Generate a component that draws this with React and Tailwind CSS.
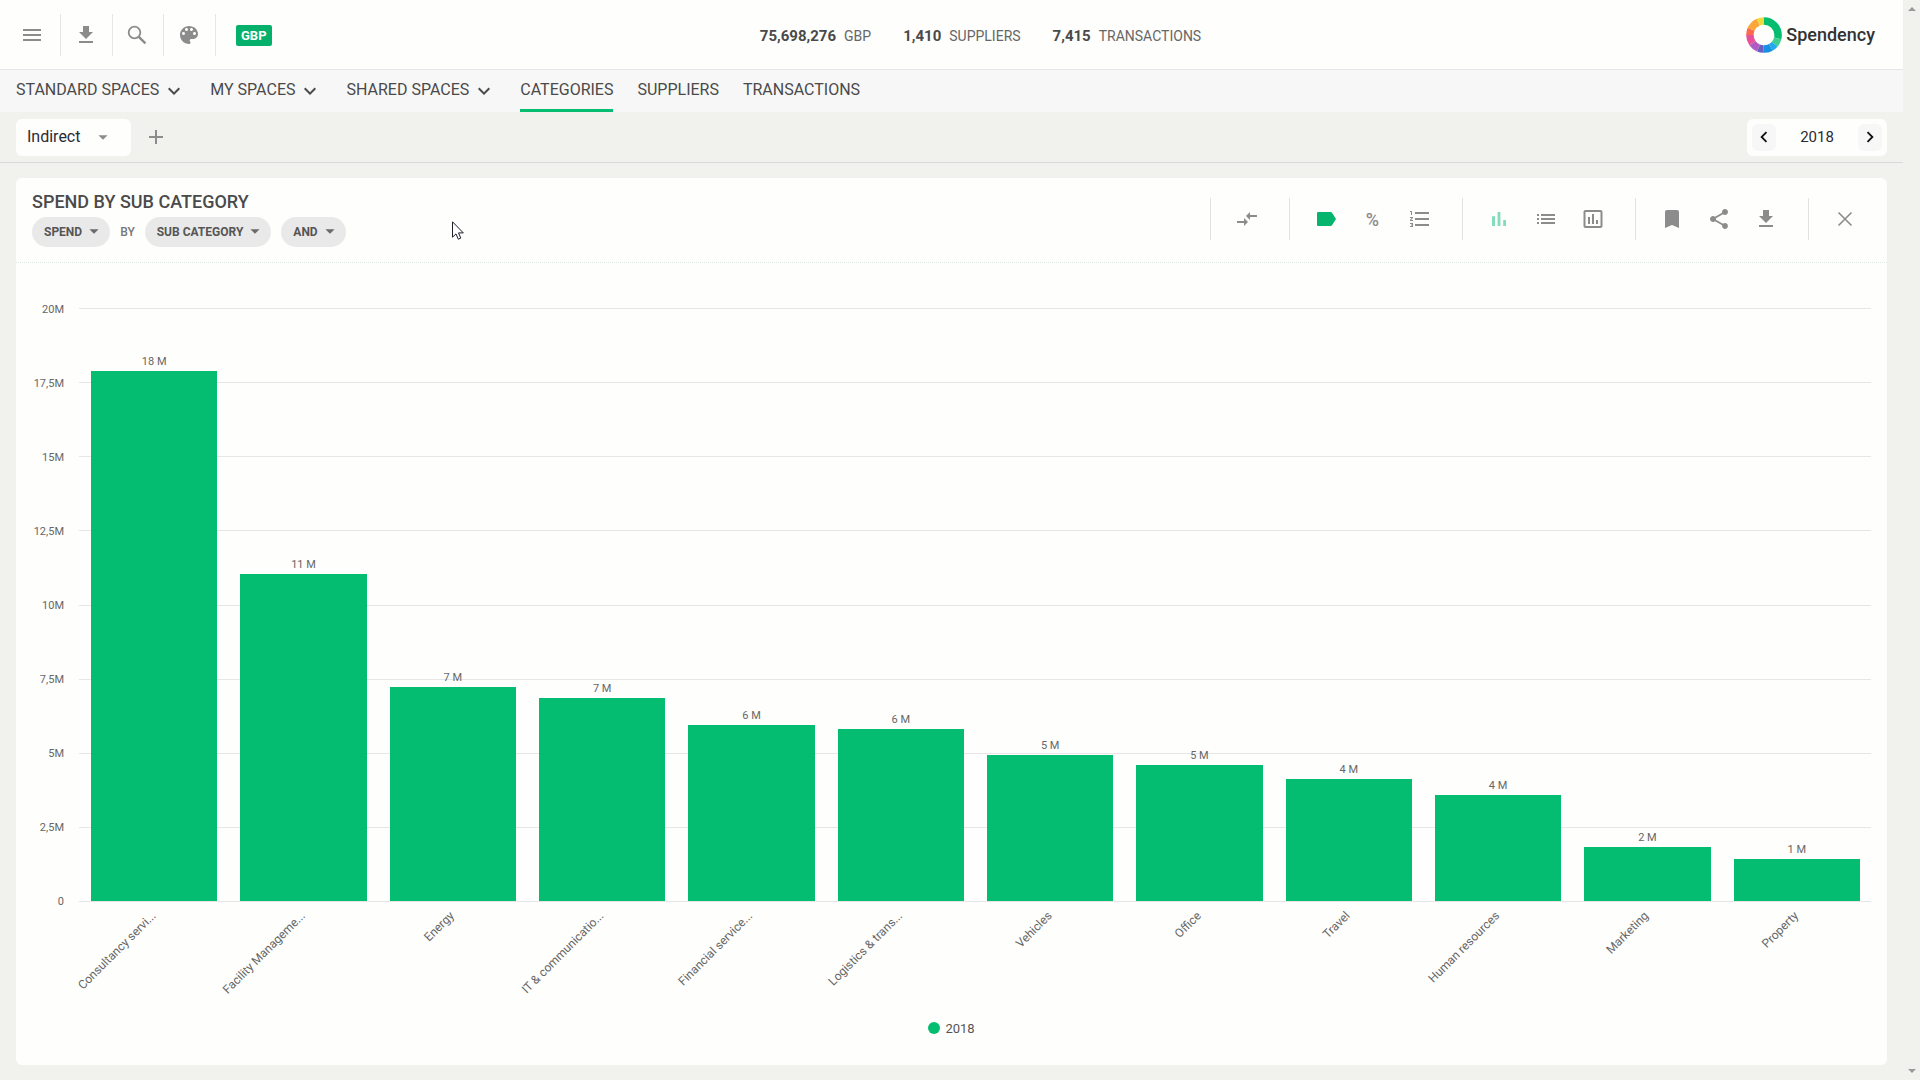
import React from "react";

const PATHS = {
  menu: "M3 18h18v-2H3v2zm0-5h18v-2H3v2zm0-7v2h18V6H3z",
  download: "M19 9h-4V3H9v6H5l7 7 7-7zM5 18v2h14v-2H5z",
  palette:
    "M12 3c-4.97 0-9 4.03-9 9s4.03 9 9 9c.83 0 1.5-.67 1.5-1.5 0-.39-.15-.74-.39-1.01-.23-.26-.38-.61-.38-.99 0-.83.67-1.5 1.5-1.5H16c2.76 0 5-2.24 5-5 0-4.42-4.03-8-9-8zm-5.5 9c-.83 0-1.5-.67-1.5-1.5S5.67 9 6.5 9 8 9.67 8 10.5 7.33 12 6.5 12zm3-4C8.67 8 8 7.33 8 6.5S8.67 5 9.5 5s1.5.67 1.5 1.5S10.33 8 9.5 8zm5 0c-.83 0-1.5-.67-1.5-1.5S13.67 5 14.5 5s1.5.67 1.5 1.5S15.33 8 14.5 8zm3 4c-.83 0-1.5-.67-1.5-1.5S16.67 9 17.5 9s1.5.67 1.5 1.5-.67 1.5-1.5 1.5z",
  caret: "M7 10l5 5 5-5z",
  chevronDown: "M7.41 8.59L12 13.17l4.59-4.58L18 10l-6 6-6-6 1.41-1.41z",
  chevronLeft: "M15.41 7.41L14 6l-6 6 6 6 1.41-1.41L10.83 12z",
  chevronRight: "M10 6L8.59 7.41 13.17 12l-4.58 4.59L10 18l6-6z",
  plus: "M19 13h-6v6h-2v-6H5v-2h6V5h2v6h6v2z",
  compare: "M9.01 14H2v2h7.01v3L13 15l-3.99-4v3zm5.98-1v-3H22V8h-7.01V5L11 9l3.99 4z",
  label: "M16.8 5H4.2C3.5 5 3 5.6 3 6.300v11.400C3 18.400 3.500 19 4.200 19h12.600c.5 0 .9-.2 1.200-.7L22 12l-4-6.300c-.3-.5-.7-.7-1.200-.7z",
  numbered:
    "M2 17h2v.5H3v1h1v.5H2v1h3v-4H2v1zm1-9h1V4H2v1h1v3zm-1 3h1.800L2 13.100v.9h3v-1H3.200L5 10.900V10H2v1zm5-6v2h14V5H7zm0 14h14v-2H7v2zm0-6h14v-2H7v2z",
  bars: "M5 9.200h3V19H5zM10.600 5h2.800v14h-2.800zm5.600 8H19v6h-2.800z",
  list: "M3 13h2v-2H3v2zm0 4h2v-2H3v2zm0-8h2V7H3v2zm4 4h14v-2H7v2zm0 4h14v-2H7v2zM7 7v2h14V7H7z",
  chart:
    "M9 17H7v-7h2v7zm4 0h-2V7h2v10zm4 0h-2v-4h2v4zm2.500 2.100h-15V5h15v14.100zm0-16.100h-15c-1.100 0-2 .9-2 2v14c0 1.100.9 2 2 2h15c1.100 0 2-.9 2-2V5c0-1.100-.9-2-2-2z",
  bookmark: "M17 3H7c-1.100 0-1.990.9-1.990 2L5 21l7-3 7 3V5c0-1.100-.9-2-2-2z",
  share:
    "M18 16.080c-.76 0-1.440.3-1.960.77L8.910 12.700c.05-.23.09-.46.09-.7s-.04-.47-.09-.7l7.050-4.110c.54.5 1.250.81 2.040.81 1.660 0 3-1.340 3-3s-1.340-3-3-3-3 1.340-3 3c0 .24.04.47.09.7L8.040 9.810C7.500 9.310 6.790 9 6 9c-1.660 0-3 1.340-3 3s1.340 3 3 3c.79 0 1.500-.31 2.040-.81l7.120 4.160c-.05.21-.08.43-.08.65 0 1.610 1.310 2.920 2.920 2.920 1.610 0 2.920-1.310 2.920-2.920s-1.310-2.920-2.920-2.920z",
};

function Icon({ name, className = "size-6" }) {
  return (
    <svg viewBox="0 0 24 24" fill="currentColor" aria-hidden="true" className={className}>
      <path d={PATHS[name]} />
    </svg>
  );
}

function SearchIcon() {
  return (
    <svg viewBox="0 0 24 24" fill="none" stroke="currentColor" strokeWidth="1.800" aria-hidden="true" className="size-6">
      <circle cx="9.500" cy="9.500" r="5.800" />
      <path d="M13.600 13.600l6.800 6.800" strokeWidth="2.400" />
    </svg>
  );
}

function CloseIcon() {
  return (
    <svg viewBox="0 0 24 24" fill="none" stroke="currentColor" strokeWidth="1.600" aria-hidden="true" className="size-6">
      <path d="M5.500 5.500l13 13M18.500 5.500l-13 13" />
    </svg>
  );
}

const RING = [
  [0, 104, "#05bd70"],
  [104, 27, "#3fd08f"],
  [131, 20, "#25a9ee"],
  [151, 32, "#1690e0"],
  [183, 20, "#6a5fc0"],
  [203, 32, "#b05ac4"],
  [235, 35, "#e8509a"],
  [270, 24, "#fb6a4d"],
  [294, 42, "#f9a63a"],
  [336, 24, "#eed93f"],
];

function Logo() {
  return (
    <a href="#home" className="flex items-center gap-1">
      <svg viewBox="0 0 36 36" className="size-9" aria-hidden="true">
        <g transform="rotate(-90 18 18)" fill="none" strokeWidth="7.500">
          {RING.map(([start, len, color]) => (
            <circle
              key={start}
              cx="18"
              cy="18"
              r="14.100"
              pathLength="360"
              stroke={color}
              strokeDasharray={`${len} ${360 - len}`}
              strokeDashoffset={-start}
            />
          ))}
        </g>
      </svg>
      <span className="text-lg leading-6 font-medium text-[#333]">Spendency</span>
    </a>
  );
}

function TopButton({ label, className, children }) {
  return (
    <button type="button" aria-label={label} className={`flex h-[42px] items-center justify-center border-r border-[#e6e6e6] text-[#8c8c8c] ${className}`}>
      {children}
    </button>
  );
}

const STATS = [
  ["75,698,276", "GBP"],
  ["1,410", "SUPPLIERS"],
  ["7,415", "TRANSACTIONS"],
];

function TopBar() {
  return (
    <header className="grid h-[70px] grid-cols-[1fr_auto_1fr] items-center border-b border-[#e6e6e6] bg-[#fefefd] pr-7">
      <div className="flex items-center">
        <TopButton label="Menu" className="w-[61px] pl-1"><Icon name="menu" /></TopButton>
        <TopButton label="Download" className="w-[52px] pr-0.5"><Icon name="download" /></TopButton>
        <TopButton label="Search" className="w-[51px] pr-0.5"><SearchIcon /></TopButton>
        <TopButton label="Theme" className="w-[52px] pr-0.5"><Icon name="palette" /></TopButton>
        <button type="button" className="mt-0.5 ml-5 h-[21px] rounded-xs bg-[#05b06b] px-[5px] text-[13px] leading-[21px] font-bold text-white">GBP</button>
      </div>
      <dl className="flex items-center gap-8 pt-1 pl-[86px]">
        {STATS.map(([value, unit]) => (
          <div key={unit} className="flex flex-row-reverse items-baseline gap-2">
            <dt className="text-sm text-[#666]">{unit}</dt>
            <dd className="text-[15px] font-bold text-[#4a4a4a]">{value}</dd>
          </div>
        ))}
      </dl>
      <div className="flex justify-end"><Logo /></div>
    </header>
  );
}

function Nav() {
  return (
    <nav className="flex h-[42px] items-stretch gap-6 bg-[#f7f7f7] px-4 text-base text-[#4a4a4a]">
      {["STANDARD SPACES", "MY SPACES", "SHARED SPACES"].map((t) => (
        <button key={t} type="button" className="flex items-center gap-[3px] border-b-3 border-transparent">
          {t}
          <Icon name="chevronDown" className="mt-0.5 size-6" />
        </button>
      ))}
      <a href="#categories" aria-current="page" className="flex items-center border-b-3 border-[#05bd70]">CATEGORIES</a>
      <a href="#suppliers" className="flex items-center border-b-3 border-transparent">SUPPLIERS</a>
      <a href="#transactions" className="flex items-center border-b-3 border-transparent">TRANSACTIONS</a>
    </nav>
  );
}

function FilterBar() {
  return (
    <div className="flex h-[51px] items-center justify-between border-b border-[#d9dadc] px-4">
      <div className="flex items-center gap-[9px]">
        <button type="button" className="flex h-[37px] w-[115px] items-center gap-3 rounded-md bg-[#fefefd] pl-[11px] text-base text-[#2b2b33]">
          Indirect
          <Icon name="caret" className="size-[22px] text-[#8c8c8c]" />
        </button>
        <button type="button" aria-label="Add tab" className="flex size-8 items-center justify-center text-[#8c8c8c]">
          <Icon name="plus" />
        </button>
      </div>
      <div className="flex h-[37px] w-[140px] items-center justify-between rounded-md bg-[#fefefd] px-[5px] text-[15px] text-[#2b2b33]">
        <button type="button" aria-label="Previous year" className="flex h-[27px] w-6 items-center justify-center rounded-md bg-[#f7f7f7] text-[#111]">
          <Icon name="chevronLeft" className="size-[22px]" />
        </button>
        2018
        <button type="button" aria-label="Next year" className="flex h-[27px] w-6 items-center justify-center rounded-md bg-[#f7f7f7] text-[#111]">
          <Icon name="chevronRight" className="size-[22px]" />
        </button>
      </div>
    </div>
  );
}

function Pill({ children }) {
  return (
    <button type="button" className="flex h-[30px] items-center gap-px rounded-full bg-[#e9e9ea] pr-[5px] pl-3 text-xs font-bold text-[#555]">
      {children}
      <Icon name="caret" className="mb-0.5 size-[22px] text-[#6a6a6a]" />
    </button>
  );
}

function ToolGroup({ children }) {
  return <div className="flex h-[42px] border-l border-[#e2e2e2] pr-[19px] pl-3">{children}</div>;
}

function Tool({ label, className = "text-[#8c8c8c]", children }) {
  return (
    <button type="button" aria-label={label} className={`flex w-[47px] items-center justify-center ${className}`}>
      {children}
    </button>
  );
}

function CardHeader() {
  return (
    <div className="flex h-[85px] items-center justify-between border-b border-dotted border-[#dfe7e2] pl-4">
      <div className="pb-1">
        <h1 className="text-lg leading-6 font-medium text-[#4a4a4a]">SPEND BY SUB CATEGORY</h1>
        <div className="mt-[3px] flex items-center gap-2.5">
          <Pill>SPEND</Pill>
          <span className="text-xs font-medium text-[#777]">BY</span>
          <Pill>SUB CATEGORY</Pill>
          <Pill>AND</Pill>
        </div>
      </div>
      <div className="flex pb-0.5">
        <ToolGroup>
          <Tool label="Compare"><Icon name="compare" /></Tool>
        </ToolGroup>
        <ToolGroup>
          <Tool label="Labels" className="text-[#05b56d]"><Icon name="label" /></Tool>
          <Tool label="Percent" className="pt-0.5 text-lg font-medium text-[#8c8c8c]">%</Tool>
          <Tool label="Ranking"><Icon name="numbered" /></Tool>
        </ToolGroup>
        <ToolGroup>
          <Tool label="Bar chart" className="text-[#82dcbd]"><Icon name="bars" /></Tool>
          <Tool label="List"><Icon name="list" /></Tool>
          <Tool label="Chart options"><Icon name="chart" /></Tool>
        </ToolGroup>
        <ToolGroup>
          <Tool label="Bookmark"><Icon name="bookmark" /></Tool>
          <Tool label="Share"><Icon name="share" /></Tool>
          <Tool label="Export"><Icon name="download" /></Tool>
        </ToolGroup>
        <ToolGroup>
          <Tool label="Close"><CloseIcon /></Tool>
        </ToolGroup>
      </div>
    </div>
  );
}

const AXIS_MAX = 20;
const TICKS = ["20M", "17,5M", "15M", "12,5M", "10M", "7,5M", "5M", "2,5M", "0"];
const DATA = [
  ["Consultancy servi...", 17.87, "18 M"],
  ["Facility Manageme...", 11.03, "11 M"],
  ["Energy", 7.22, "7 M"],
  ["IT & communicatio...", 6.85, "7 M"],
  ["Financial service...", 5.94, "6 M"],
  ["Logistics & trans...", 5.79, "6 M"],
  ["Vehicles", 4.92, "5 M"],
  ["Office", 4.59, "5 M"],
  ["Travel", 4.12, "4 M"],
  ["Human resources", 3.58, "4 M"],
  ["Marketing", 1.82, "2 M"],
  ["Property", 1.42, "1 M"],
];

function Chart() {
  return (
    <div className="flex flex-1 flex-col pt-[45px] pr-4 text-[#666]">
      <div className="flex flex-1 text-[11px]">
        <div className="flex w-[63px] flex-col justify-between pr-[15px] text-right">
          {TICKS.map((t) => (
            <span key={t} className="flex h-px items-center justify-end pt-0.5">{t}</span>
          ))}
        </div>
        <div className="relative flex-1">
          <div className="flex h-full flex-col justify-between">
            {TICKS.map((t) => (
              <div key={t} className="h-px bg-[#e6e6e6]" />
            ))}
          </div>
          <div className="absolute inset-x-0 top-0 bottom-px flex items-end">
            {DATA.map(([name, value, text]) => (
              <div key={name} className="flex h-full flex-1 flex-col justify-end pr-[11px] pl-3">
                <span className="pb-px text-center leading-4">{text}</span>
                <div className="bg-[#05bd70]" style={{ height: `${(value / AXIS_MAX) * 100}%` }} />
              </div>
            ))}
          </div>
        </div>
      </div>
      <div className="flex h-[117px] pt-1.5 pl-[63px] text-xs">
        {DATA.map(([name]) => (
          <div key={name} className="flex flex-1 justify-start">
            <div className="flex w-1/2 justify-end pr-1.5">
              <span className="h-4 origin-top-right -rotate-45 leading-4 whitespace-nowrap">{name}</span>
            </div>
          </div>
        ))}
      </div>
      <div className="flex h-[46px] items-start justify-center gap-[5px] pl-4 text-[13px] leading-5 text-[#555]">
        <span className="mt-[3px] size-3 rounded-full bg-[#05bd70]" />
        2018
      </div>
    </div>
  );
}

function Pointer() {
  return (
    <svg viewBox="0 0 12 19" className="pointer-events-none absolute top-[221px] left-[452px] h-[19px] w-3" aria-hidden="true">
      <path d="M.5.8v15.400l3.500-3.300 2.300 5.300 2.500-1.100-2.300-5.200h4.800z" fill="#fff" stroke="#1e1e2a" />
    </svg>
  );
}

export default function App() {
  return (
    <div className="relative flex min-h-screen bg-[#f1f1ed] font-['Roboto',sans-serif]">
      <div className="flex flex-1 flex-col">
        <TopBar />
        <Nav />
        <FilterBar />
        <main className="flex flex-1 flex-col px-4 pt-[15px] pb-[15px]">
          <section className="flex flex-1 flex-col rounded-md bg-[#fefefd]">
            <CardHeader />
            <Chart />
          </section>
        </main>
      </div>
      <div className="flex w-[17px] flex-col items-center justify-between py-[7px] text-[#9a9a9a]" aria-hidden="true">
        <svg viewBox="0 0 8 4" className="h-1 w-2" fill="currentColor"><path d="M0 4l4-4 4 4z" /></svg>
        <svg viewBox="0 0 8 4" className="h-1 w-2" fill="currentColor"><path d="M0 0l4 4 4-4z" /></svg>
      </div>
      <Pointer />
    </div>
  );
}
